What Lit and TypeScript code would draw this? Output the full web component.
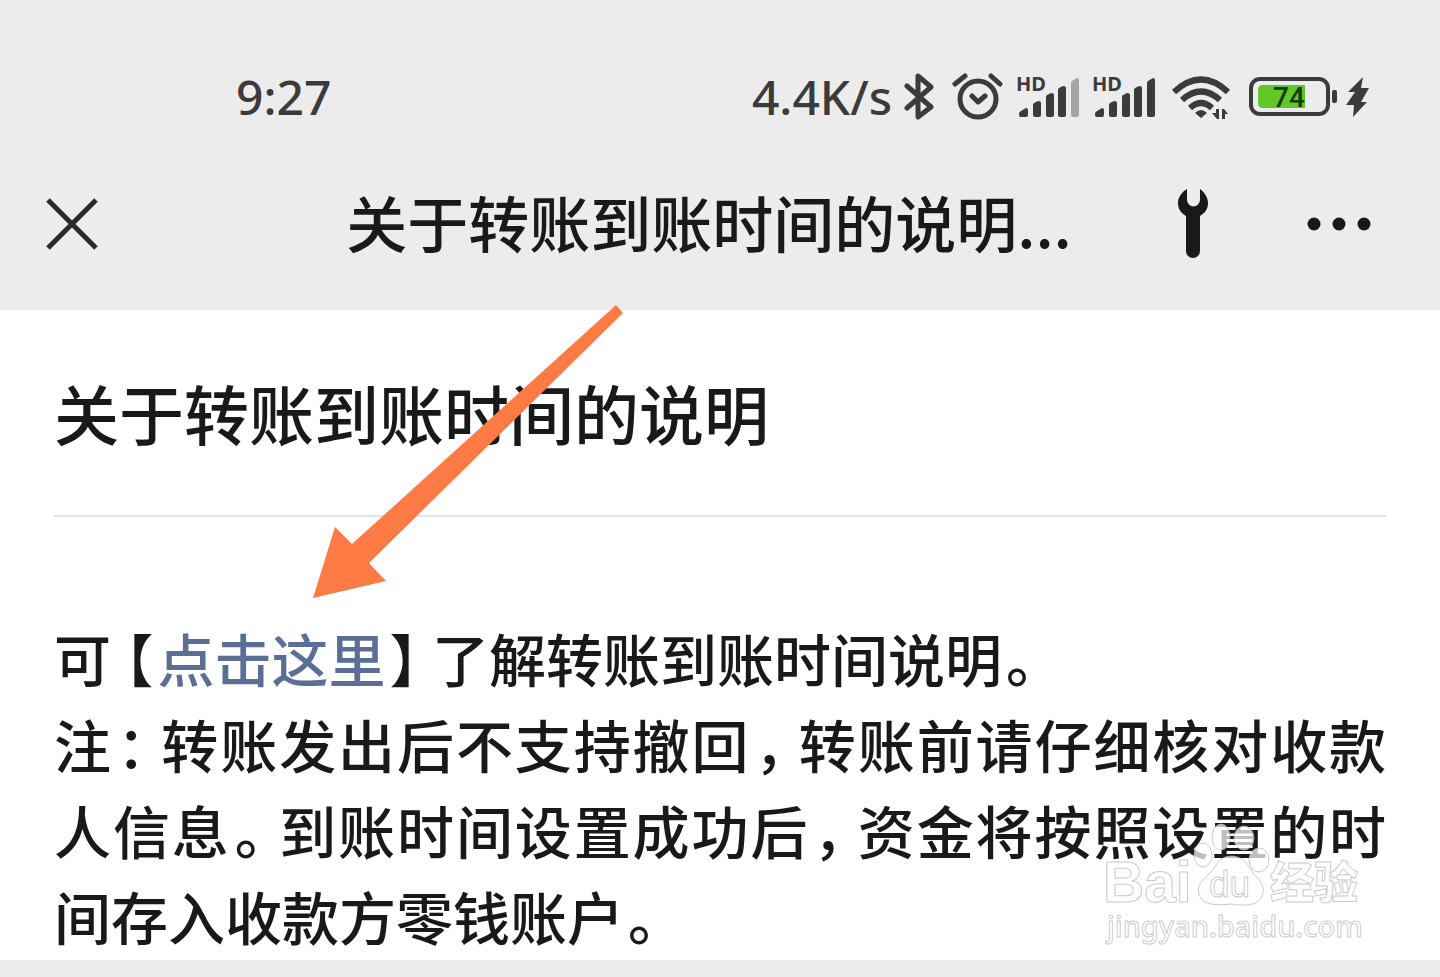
import { LitElement, html, css, svg } from "lit";
import { customElement, property } from "lit/decorators.js";

@customElement("signal-bars")
class SignalBars extends LitElement {
  @property({ type: Boolean }) weak = false;

  static styles = css`
    :host { display: block; height: 52px; }
    .icon { display: block; fill: #3b3b3b; overflow: visible; }
    .label { font: 700 20px "Noto Sans", sans-serif; }
    .faded { fill: #a5a5a5; }
  `;

  render() {
    return html`
      <svg class="icon" width="64" height="52" viewBox="0 0 64 52" role="img" aria-label="HD signal">
        <text class="label" x="0" y="19">HD</text>
        <path d="M3 43V42q0-2 2-3l5-3q2 0 2 2v5q0 2-2 2H5q-2 0-2-2z" />
        <path d="M17 43V33q0-1 1-2l4-2q3 0 3 2v12q0 2-2 2h-4q-2 0-2-2z" />
        <path d="M30 43V25q0-1 1-2l4-2q3 0 3 2v20q0 2-2 2h-4q-2 0-2-2z" />
        <path d="M42 43V18q0-1 1-2l4-2q3 0 3 2v27q0 2-2 2h-4q-2 0-2-2z" />
        <path class=${this.weak ? "faded" : ""} d="M55 43V11q0-1 1-2l5-3q2 0 2 2v35q0 2-2 2h-4q-2 0-2-2z" />
      </svg>
    `;
  }
}

@customElement("status-bar")
class StatusBar extends LitElement {
  static styles = css`
    :host {
      display: flex;
      align-items: center;
      justify-content: space-between;
      padding: 0 70px 0 236px;
      height: 52px;
      color: #3b3b3b;
      font: 500 48px/48px "Noto Sans", sans-serif;
    }
    .reading { padding-bottom: 2px; }
    .tray { display: flex; align-items: center; gap: 12px; }
    .icon { display: block; fill: #3b3b3b; }
    .line { fill: none; stroke: #3b3b3b; stroke-width: 5; stroke-linecap: round; stroke-linejoin: round; }
    .arc { fill: none; stroke: #3b3b3b; stroke-width: 6; }
    .shell { fill: none; stroke: #3b3b3b; stroke-width: 4; }
    .charge { fill: #62c728; }
    .percent { font: 500 28px "Roboto", sans-serif; fill: #123c08; }
  `;

  render() {
    return html`
      <time class="reading">9:27</time>
      <div class="tray">
        <span class="reading">4.4K/s</span>
        <svg class="icon" width="36" height="52" viewBox="0 0 36 52" role="img" aria-label="Bluetooth">
          <path class="line" d="M3 14L27 35 14 45V4l13 11L3 36" />
        </svg>
        <svg class="icon" width="52" height="52" viewBox="0 0 52 52" role="img" aria-label="Alarm">
          <circle class="line" cx="26" cy="27" r="18" />
          <path class="line" d="M20 24l6 6 7-6M3 12L13 4M39 4l9 8" />
        </svg>
        <signal-bars weak></signal-bars>
        <signal-bars></signal-bars>
        <svg class="icon" width="68" height="52" viewBox="0 0 68 52" role="img" aria-label="Wi-Fi">
          <path class="arc" d="M6 20Q33-5 60 20M14 28Q33 11 52 28M22 36Q33 26 44 36" />
          <path d="M27 41q6-6 12 0l-6 5zM44 41h4v-4h3v10h-2zM54 47V37h2l4 5h-3v5z" />
        </svg>
        <svg class="icon" width="122" height="52" viewBox="0 0 122 52" role="img" aria-label="Battery 74%, charging">
          <rect class="shell" x="3" y="7" width="77" height="35" rx="9" />
          <path class="charge" d="M15 13h42v23H15q-5 0-5-5V18q0-5 5-5z" />
          <text class="percent" x="25" y="35">74</text>
          <rect x="84" y="18" width="5" height="13" rx="2" />
          <path d="M115 5L100 20h7L98 33h8l-1 12 14-15h-6l8-14h-8z" />
        </svg>
      </div>
    `;
  }
}

@customElement("baidu-mark")
class BaiduMark extends LitElement {
  static styles = css`
    :host { display: block; }
    .mark {
      display: block;
      fill: rgba(255, 255, 255, 0.72);
      stroke: rgba(180, 180, 180, 0.7);
      stroke-width: 1;
    }
    .latin { font: 700 57px "Liberation Sans", sans-serif; }
    .du { font: 400 37px "Liberation Sans", sans-serif; }
    .cjk { font: 900 44px "Noto Sans CJK SC", sans-serif; }
    .site { font: 500 29px "Noto Sans", sans-serif; }
  `;

  render() {
    const toes = [
      [103, 35, 9, 12],
      [121, 17, 9, 13],
      [144, 18, 10, 12],
      [159, 40, 10, 12],
    ];
    return html`
      <svg class="mark" width="270" height="130" viewBox="0 0 270 130">
        ${toes.map(([x, y, rx, ry]) => svg`<ellipse cx=${x} cy=${y} rx=${rx} ry=${ry} />`)}
        <path d="M131 36C119 36 116 47 109 54 101 61 97 66 99 74 102 84 112 86 131 84 150 87 161 84 163 73 165 63 156 58 151 50 147 43 142 36 131 36z" />
        <text class="latin" x="3" y="82">Bai</text>
        <text class="du" x="109" y="77">du</text>
        <text class="cjk" x="170" y="79">经验</text>
        <text class="site" x="7" y="117">jingyan.baidu.com</text>
      </svg>
    `;
  }
}

@customElement("app-root")
class AppRoot extends LitElement {
  static styles = css`
    :host {
      display: block;
      min-height: 100vh;
      background: #ececec;
      color: #191919;
      font-family: "Noto Sans CJK SC", sans-serif;
      font-weight: 500;
    }
    .top { padding: 72px 0 40px; }
    .nav {
      display: grid;
      grid-template-columns: 1fr auto 1fr;
      align-items: center;
      margin-top: 54px;
      padding: 0 68px 0 46px;
      height: 92px;
    }
    .title { padding-bottom: 4px; font-size: 61px; line-height: 88px; white-space: nowrap; }
    .tools { display: flex; justify-content: flex-end; align-items: center; gap: 96px; }
    .btn { display: block; padding: 0; border: 0; background: none; color: inherit; }
    .glyph { display: block; fill: #191919; }
    .cross { display: block; fill: none; stroke: #2b2b2b; stroke-width: 5; }
    .article { position: relative; padding: 54px 54px 2px; background: #fff; }
    .heading {
      margin: 0;
      padding-bottom: 55px;
      border-bottom: 2px solid #e4e4e4;
      font-size: 65px;
      font-weight: 500;
      line-height: 96px;
    }
    .body { padding: 97px 0 0; font-size: 57px; line-height: 86px; text-align: justify; }
    .para { margin: 0; }
    .open, .close { font-feature-settings: "halt"; }
    .open { padding: 0 4px 0 14px; }
    .close { padding: 0 14px 0 4px; }
    .link { color: #5b6e96; text-decoration: none; }
    .arrow { position: absolute; left: 313px; top: -5px; fill: #ff7b46; pointer-events: none; }
    .stamp { position: absolute; right: 70px; bottom: 10px; }
  `;

  render() {
    return html`
      <header class="top">
        <status-bar></status-bar>
        <nav class="nav">
          <div>
            <button class="btn" aria-label="关闭">
              <svg class="cross" width="52" height="52" viewBox="0 0 52 52"><path d="M2 2l48 48M50 2L2 50" /></svg>
            </button>
          </div>
          <div class="title">关于转账到账时间的说明...</div>
          <div class="tools">
            <button class="btn" aria-label="工具">
              <svg class="glyph" width="32" height="70" viewBox="0 0 32 70">
                <path d="M9 0C4 3 0 8 0 14c0 6 3 10 8 13v35a7 7 0 0 0 14 0V27c5-3 8-7 8-13 0-6-4-11-8-14v11a6 6 0 0 1-13 0z" />
              </svg>
            </button>
            <button class="btn" aria-label="更多">
              <svg class="glyph" width="66" height="14" viewBox="0 0 66 14">
                <circle cx="8" cy="7" r="6.5" /><circle cx="33" cy="7" r="6.5" /><circle cx="58" cy="7" r="6.5" />
              </svg>
            </button>
          </div>
        </nav>
      </header>
      <article class="article">
        <h1 class="heading">关于转账到账时间的说明</h1>
        <div class="body" lang="zh-CN">
          <p class="para">可<span class="open">【</span><a class="link" href="#">点击这里</a><span class="close">】</span>了解转账到账时间说明<span class="close">。</span></p>
          <p class="para">注<span class="close">：</span>转账发出后不支持撤回<span class="close">，</span>转账前请仔细核对收款人信息<span class="close">。</span>到账时间设置成功后<span class="close">，</span>资金将按照设置的时间存入收款方零钱账户<span class="close">。</span></p>
        </div>
        <svg class="arrow" width="310" height="293" viewBox="0 0 310 293" aria-hidden="true">
          <path d="M303 0l7 8L56 258l17 18L0 293l22-71 17 17z" />
        </svg>
        <baidu-mark class="stamp"></baidu-mark>
      </article>
    `;
  }
}
